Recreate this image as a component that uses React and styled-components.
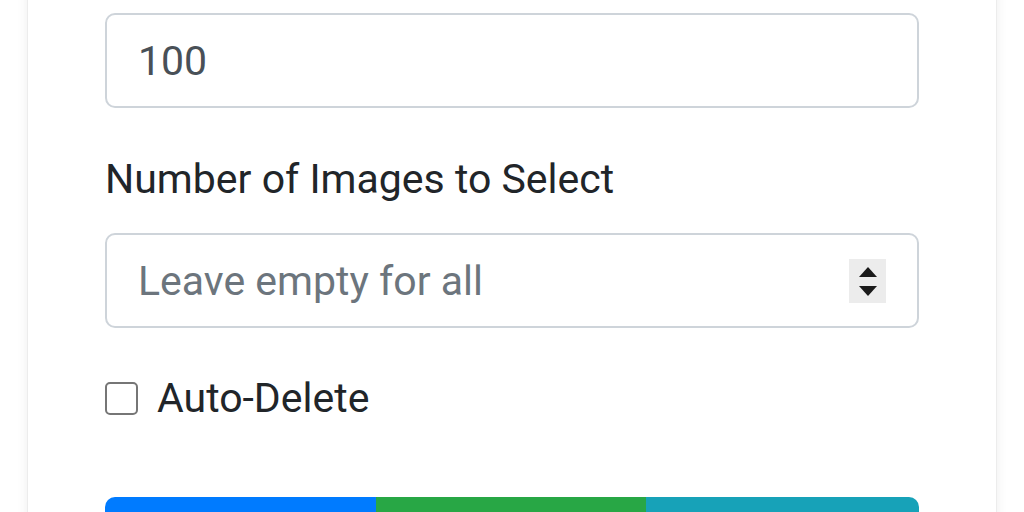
import React from "react";
import styled, { createGlobalStyle } from "styled-components";

const GlobalStyle = createGlobalStyle`
  html, body {
    margin: 0;
    padding: 0;
    background: #fff;
    overflow: hidden;
  }
  body {
    font-family: Roboto, "Liberation Sans", sans-serif;
    color: #212529;
  }
`;

const Page = styled.div`
  display: flow-root;
  height: 512px;
  overflow: hidden;
  padding: 0 27px 0 27px;
  box-sizing: border-box;
`;

const Card = styled.div`
  margin-top: -40px;
  padding: 52px 77px 0 77px;
  height: 680px;
  background: #fff;
  border: 1px solid #ececec;
  border-radius: 10px;
  box-shadow: 0 0 12px rgba(0, 0, 0, 0.07);
`;

const FormGroup = styled.div`
  display: flex;
  flex-direction: column;
  margin-bottom: ${(p) => p.gap || 41}px;
`;

const Label = styled.label`
  font-size: 41px;
  line-height: 60px;
  color: #212529;
  margin-bottom: 24px;
`;

const InputWrap = styled.div`
  position: relative;
`;

const Input = styled.input`
  display: block;
  width: 100%;
  height: 95px;
  box-sizing: border-box;
  padding: 0 30px 0 31px;
  font-family: Roboto, "Liberation Sans", sans-serif;
  font-size: 41px;
  color: #495057;
  background: #fff;
  border: 2px solid #ced4da;
  border-radius: 10px;
  outline: none;
  &::placeholder {
    color: #6c757d;
    opacity: 1;
  }
  &::-webkit-inner-spin-button,
  &::-webkit-outer-spin-button {
    -webkit-appearance: none;
    margin: 0;
  }
`;

const Spinner = styled.span`
  position: absolute;
  right: 33px;
  top: 26px;
  width: 37px;
  height: 44px;
  background: #ececec;
  display: flex;
  flex-direction: column;
  align-items: center;
  justify-content: center;
  gap: 9px;
`;

const Arrow = styled.span`
  width: 0;
  height: 0;
  border-left: 9px solid transparent;
  border-right: 9px solid transparent;
  ${(p) =>
    p.down
      ? "border-top: 10px solid #1a1a1a;"
      : "border-bottom: 10px solid #1a1a1a;"}
`;

const CheckRow = styled.label`
  display: flex;
  align-items: center;
  gap: 19px;
  height: 60px;
  font-size: 41px;
  color: #212529;
  margin-bottom: 69px;
`;

const Box = styled.span`
  width: 29px;
  height: 29px;
  border: 2px solid #767676;
  border-radius: 5px;
  background: #fff;
`;

const BtnGroup = styled.div`
  display: flex;
  height: 95px;
`;

const Btn = styled.button`
  flex: ${(p) => p.w};
  border: none;
  background: ${(p) => p.bg};
  &:first-child {
    border-radius: 10px 0 0 10px;
  }
  &:last-child {
    border-radius: 0 10px 10px 0;
  }
`;

export default function App() {
  return (
    <Page>
      <GlobalStyle />
      <Card>
        <FormGroup gap={41}>
          <Input type="number" defaultValue="100" />
        </FormGroup>
        <FormGroup gap={40}>
          <Label>Number of Images to Select</Label>
          <InputWrap>
            <Input type="number" placeholder="Leave empty for all" />
            <Spinner>
              <Arrow />
              <Arrow down />
            </Spinner>
          </InputWrap>
        </FormGroup>
        <CheckRow>
          <Box />
          Auto-Delete
        </CheckRow>
        <BtnGroup>
          <Btn w={271} bg="#007bff" aria-label="primary" />
          <Btn w={269} bg="#28a745" aria-label="success" />
          <Btn w={273} bg="#17a2b8" aria-label="info" />
        </BtnGroup>
      </Card>
    </Page>
  );
}
